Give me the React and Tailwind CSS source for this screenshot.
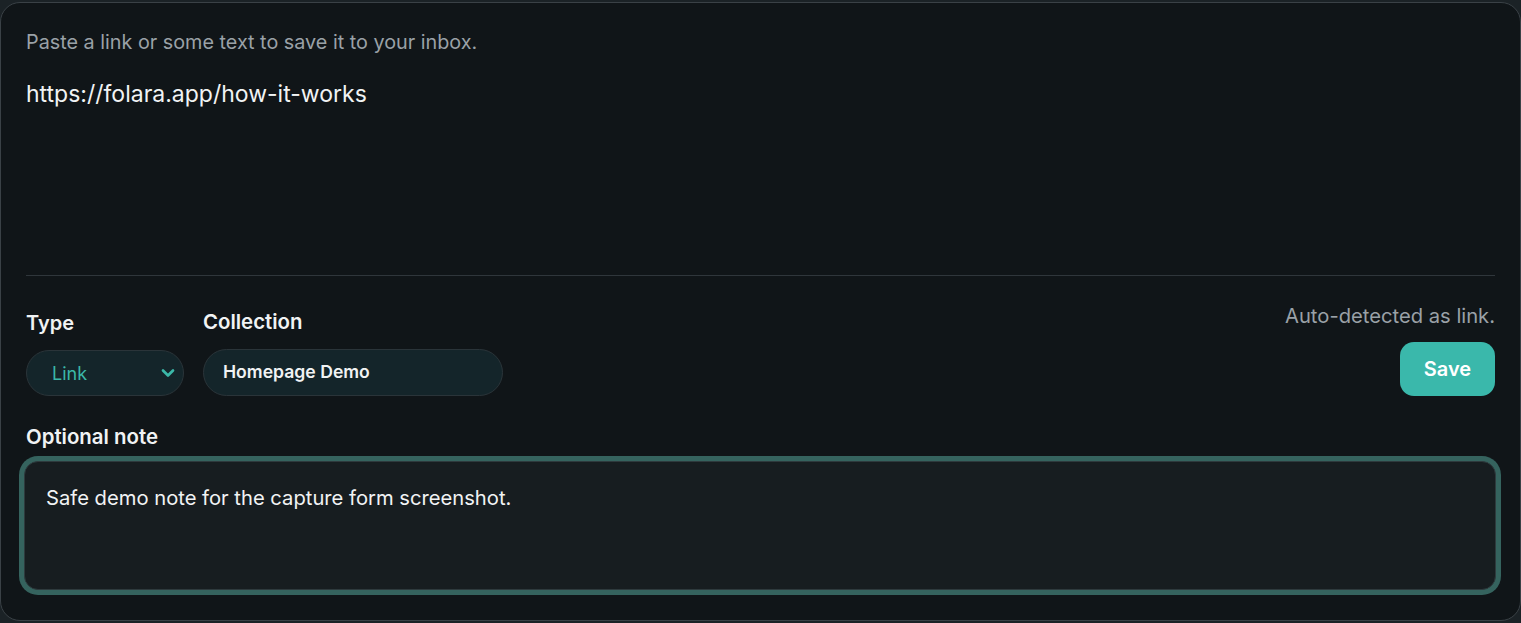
import { ChevronDown } from "lucide-react"

const font = { fontFamily: "Inter, 'Noto Sans', sans-serif" }

const App = () => {
  return (
    <div className="w-[1521px] h-[623px] bg-[#1b2226] pt-[2px]" style={font}>
      <div className="h-[619px] w-[1521px] rounded-[20px] border border-[#3a4146] bg-[#101518] px-[25px] pt-[27px]">
        <p className="text-[19.8px] leading-6 text-[#9aa1a7]">Paste a link or some text to save it to your inbox.</p>
        <p className="mt-[25px] text-[23px] leading-[30px] text-[#f1f3f4]">https://folara.app/how-it-works</p>

        <div className="mt-[166px] h-px w-full bg-[#2f363b]" />

        <div className="mt-[27px] flex items-start justify-between">
          <div className="flex gap-[19px]">
            <div className="flex flex-col">
              <label className="mt-[8px] text-[20px] font-semibold leading-6 text-[#f1f3f4]">Type</label>
              <div className="mt-[15px] flex h-[46px] w-[158px] items-center justify-between rounded-full border border-[#2a3439] bg-[#14252a] pl-[25px] pr-[5px]">
                <span className="text-[18px] text-[#3bb8a8]">Link</span>
                <ChevronDown size={20} strokeWidth={3.2} className="text-[#3bb8a8]" />
              </div>
            </div>
            <div className="flex flex-col">
              <label className="mt-[7px] text-[20.4px] font-semibold leading-6 text-[#f1f3f4]">Collection</label>
              <div className="mt-[15px] flex h-[47px] w-[300px] items-center rounded-full border border-[#2a3439] bg-[#14252a] pl-[19px]">
                <span className="text-[17.6px] font-semibold text-[#f1f3f4]">Homepage Demo</span>
              </div>
            </div>
          </div>
          <div className="flex flex-col items-end">
            <p className="mt-[1px] text-[20.2px] leading-6 text-[#9aa1a7]">Auto-detected as link.</p>
            <button className="mt-[14px] h-[54px] w-[95px] rounded-[14px] bg-[#3ab8ab] text-[20px] font-semibold text-white">
              Save
            </button>
          </div>
        </div>

        <label className="mt-[29px] block text-[20.4px] font-semibold leading-6 text-[#f1f3f4]">Optional note</label>
        <div className="mt-[12px] -ml-[2px] -mr-[1px] h-[129px] rounded-[14px] border border-[#2e3a3d] bg-[#171d20] pl-[21px] pt-[23px] ring-[5px] ring-[#35635e]">
          <p className="text-[20.2px] leading-[26px] text-[#f1f3f4]">Safe demo note for the capture form screenshot.</p>
        </div>
      </div>
    </div>
  )
}

export default App
